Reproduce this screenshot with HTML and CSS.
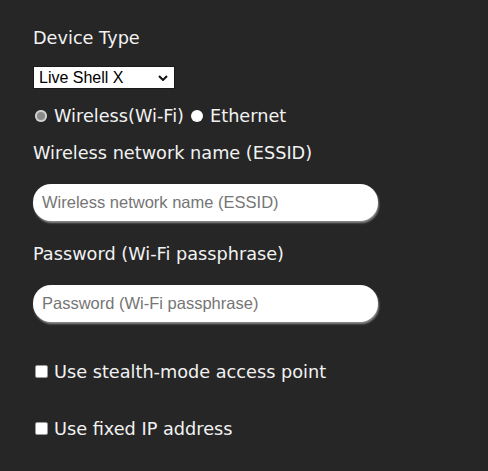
FILE: index.html
```html
<!DOCTYPE html>
<html lang="en">
<head>
  <meta charset="UTF-8" />
  <meta name="viewport" content="width=device-width, initial-scale=1.0"/>
  <title>Network settings</title>
  <link rel="stylesheet" href="styles.css">
</head>
<body>
  <div class="settings">
    <p class="title">Device Type</p>
    <div class="device-wrap">
      <select class="device">
        <option>Live Shell X</option>
        <option>Live Shell 2</option>
      </select>
      <svg class="chevron" width="10" height="6" viewBox="0 0 10 6"><path d="M1 1 L5 5 L9 1" fill="none" stroke="#111" stroke-width="2"/></svg>
    </div>
    <div class="radios">
      <label><input type="radio" name="conn" checked> Wireless(Wi-Fi)</label>
      <label><input type="radio" name="conn"> Ethernet</label>
    </div>
    <p class="title">Wireless network name (ESSID)</p>
    <input class="field" type="text" placeholder="Wireless network name (ESSID)">
    <p class="title">Password (Wi-Fi passphrase)</p>
    <input class="field" type="password" placeholder="Password (Wi-Fi passphrase)">
    <label class="check first"><input type="checkbox"> Use stealth-mode access point</label>
    <label class="check"><input type="checkbox"> Use fixed IP address</label>
  </div>
</body>
</html>
```

FILE: styles.css
```css
body {
  margin: 0;
  background-color: #262626;
  color: #f2f2f2;
  font-family: "DejaVu Sans", Verdana, sans-serif;
  font-size: 17.7px;
}
.settings {
  padding: 26px 33px 10px;
  display: flex;
  flex-direction: column;
  align-items: flex-start;
}
.title {
  margin: 0;
  line-height: 24px;
}
.device-wrap {
  position: relative;
  margin-top: 16px;
}
.device {
  display: block;
  -webkit-appearance: none;
  appearance: none;
  width: 142px;
  height: 23px;
  padding: 0 0 0 5px;
  font-family: "Liberation Sans", Arial, sans-serif;
  font-size: 16px;
  background: #fff;
  color: #000;
  border: 1px solid #1a1a1a;
  border-radius: 0;
}
.chevron {
  position: absolute;
  left: 125px;
  top: 9px;
  pointer-events: none;
}
.radios {
  margin-top: 15px;
  margin-bottom: 13px;
  display: flex;
  gap: 5px;
  line-height: 24px;
}
.radios label {
  display: flex;
  align-items: center;
}
.radios input {
  -webkit-appearance: none;
  appearance: none;
  width: 12px;
  height: 12px;
  margin: 0 7px 0 2px;
  border-radius: 50%;
  background: #fff;
}
.radios input:checked {
  background: #8a8a8a;
  box-shadow: inset 0 0 0 2px #d0d0d0;
}
.field {
  box-sizing: border-box;
  margin: 19px 0 21px;
  width: 345px;
  height: 37px;
  padding: 0 9px;
  border: none;
  border-radius: 18px;
  box-shadow: 1px 2px 2px #8a8a8a;
  font-family: "Liberation Sans", Arial, sans-serif;
  font-size: 16.5px;
  color: #000;
}
.field::placeholder {
  color: #757575;
}
.check {
  display: flex;
  align-items: center;
  line-height: 24px;
  margin-top: 12px;
  margin-bottom: 21px;
}
.check.first {
  margin-top: 17px;
}
.check:last-child {
  margin-bottom: 0;
}
.check input {
  -webkit-appearance: none;
  appearance: none;
  box-sizing: border-box;
  width: 13px;
  height: 13px;
  margin: 0 6px 2px 2px;
  background: #fff;
  border: 1px solid #9a9a9a;
  border-radius: 2px;
}
```
